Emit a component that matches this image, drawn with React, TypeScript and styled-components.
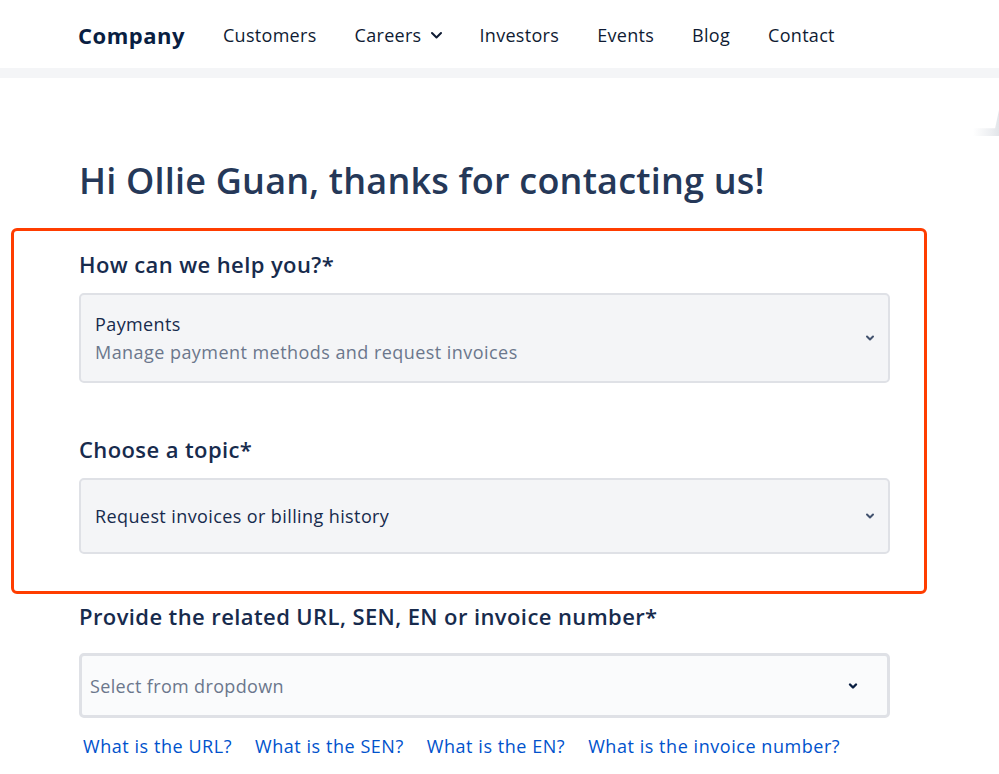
import React from 'react';
import styled, { createGlobalStyle } from 'styled-components';

const GlobalStyle = createGlobalStyle`
  html, body {
    margin: 0;
    padding: 0;
    background: #ffffff;
    font-family: "Open Sans", "Noto Sans", Arial, sans-serif;
    color: #172b4d;
    overflow: hidden;
  }
`;

const Page = styled.div`
  width: 999px;
  height: 774px;
  position: relative;
  overflow: hidden;
`;

const Header = styled.header`
  box-sizing: border-box;
  height: 68px;
  display: flex;
  align-items: center;
  padding: 2px 0 0 78px;
  gap: 38px;
`;

const Brand = styled.div`
  font-size: 22px;
  font-weight: 700;
  color: #091e42;
  letter-spacing: 0.5px;
`;

const NavItem = styled.a`
  display: flex;
  align-items: center;
  gap: 9px;
  font-size: 18px;
  letter-spacing: 0.3px;
  color: #0f1b33;
  text-decoration: none;
`;

const Band = styled.div`
  height: 10px;
  background: #f4f5f7;
`;

// sliver of an illustration peeking in from the right edge
const Corner = styled.div`
  position: absolute;
  right: 0;
  top: 110px;
  width: 26px;
  height: 26px;
  background: linear-gradient(90deg, rgba(255, 255, 255, 0) 0%, #eceef1 70%, #e2e5e9 100%);
  clip-path: polygon(100% 0, 100% 100%, 0 100%, 0 70%, 85% 70%);
`;

const Main = styled.main`
  width: 811px;
  padding: 0 0 0 79px;
`;

const Heading = styled.h1`
  margin: 81px 0 25px;
  font-size: 36px;
  font-weight: 600;
  line-height: 44px;
  color: #253858;
  letter-spacing: 0.2px;
`;

const Highlight = styled.div`
  margin: 0 -37px 0 -68px;
  padding: 20px 34px 37px 65px;
  border: 3px solid #ff3d00;
  border-radius: 6px;
`;

const Field = styled.div<{ $gap?: number }>`
  display: flex;
  flex-direction: column;
  gap: ${({ $gap }) => $gap ?? 16}px;
  & + & {
    margin-top: 53px;
  }
`;

const Label = styled.div`
  font-size: 22px;
  font-weight: 600;
  line-height: 26px;
  letter-spacing: 0.4px;
  color: #172b4d;
`;

const SelectBox = styled.div<{ $height: number; $light?: boolean }>`
  box-sizing: border-box;
  height: ${({ $height }) => $height}px;
  display: flex;
  align-items: center;
  justify-content: space-between;
  padding: 0 ${({ $light }) => ($light ? 29 : 13)}px 0 14px;
  background: ${({ $light }) => ($light ? '#fafbfc' : '#f4f5f7')};
  border: ${({ $light }) => ($light ? 3 : 2)}px solid #dfe1e6;
  border-radius: 5px;
`;

const SelectText = styled.div`
  display: flex;
  flex-direction: column;
  gap: 6px;
`;

const Value = styled.div`
  font-size: 18px;
  line-height: 22px;
  letter-spacing: 0.4px;
  color: #172b4d;
`;

const Hint = styled.div`
  font-size: 18px;
  line-height: 22px;
  letter-spacing: 0.45px;
  color: #6b778c;
`;

const Placeholder = styled.div`
  font-size: 18px;
  letter-spacing: 0.35px;
  color: #6b778c;
  margin-left: -6px;
`;

const Outside = styled.div`
  margin-top: 9px;
`;

const Links = styled.div`
  display: flex;
  gap: 23px;
  padding-left: 4px;
  margin-top: 16px;
`;

const HelpLink = styled.a`
  font-size: 18px;
  letter-spacing: 0.55px;
  color: #0052cc;
  text-decoration: none;
`;

const Chevron = ({
  size = 10,
  width = 2,
  color = '#42526e',
}: {
  size?: number;
  width?: number;
  color?: string;
}) => (
  <svg width={size} height={size} viewBox="0 0 10 10" fill="none">
    <polyline
      points="2,3.5 5,6.5 8,3.5"
      stroke={color}
      strokeWidth={width}
      strokeLinecap="round"
      strokeLinejoin="round"
    />
  </svg>
);

const NavChevron = () => (
  <svg width={11} height={10} viewBox="0 0 11 10" fill="none">
    <polyline
      points="1,3 5.5,7.5 10,3"
      stroke="#0f1b33"
      strokeWidth={2}
      strokeLinecap="round"
      strokeLinejoin="round"
    />
  </svg>
);

const navItems = ['Customers', 'Careers', 'Investors', 'Events', 'Blog', 'Contact'];

const links = ['What is the URL?', 'What is the SEN?', 'What is the EN?', 'What is the invoice number?'];

export default function App() {
  return (
    <Page>
      <GlobalStyle />
      <Header>
        <Brand>Company</Brand>
        {navItems.map((item) => (
          <NavItem key={item} href="#">
            {item}
            {item === 'Careers' && <NavChevron />}
          </NavItem>
        ))}
      </Header>
      <Band />
      <Corner />
      <Main>
        <Heading>Hi Ollie Guan, thanks for contacting us!</Heading>
        <Highlight>
          <Field>
            <Label>How can we help you?*</Label>
            <SelectBox $height={90}>
              <SelectText>
                <Value>Payments</Value>
                <Hint>Manage payment methods and request invoices</Hint>
              </SelectText>
              <Chevron />
            </SelectBox>
          </Field>
          <Field>
            <Label>Choose a topic*</Label>
            <SelectBox $height={76}>
              <Value>Request invoices or billing history</Value>
              <Chevron />
            </SelectBox>
          </Field>
        </Highlight>
        <Outside>
          <Field $gap={24}>
            <Label>Provide the related URL, SEN, EN or invoice number*</Label>
            <SelectBox $height={65} $light>
              <Placeholder>Select from dropdown</Placeholder>
              <Chevron size={10} width={2.4} color="#091e42" />
            </SelectBox>
          </Field>
          <Links>
            {links.map((l) => (
              <HelpLink key={l} href="#">
                {l}
              </HelpLink>
            ))}
          </Links>
        </Outside>
      </Main>
    </Page>
  );
}
